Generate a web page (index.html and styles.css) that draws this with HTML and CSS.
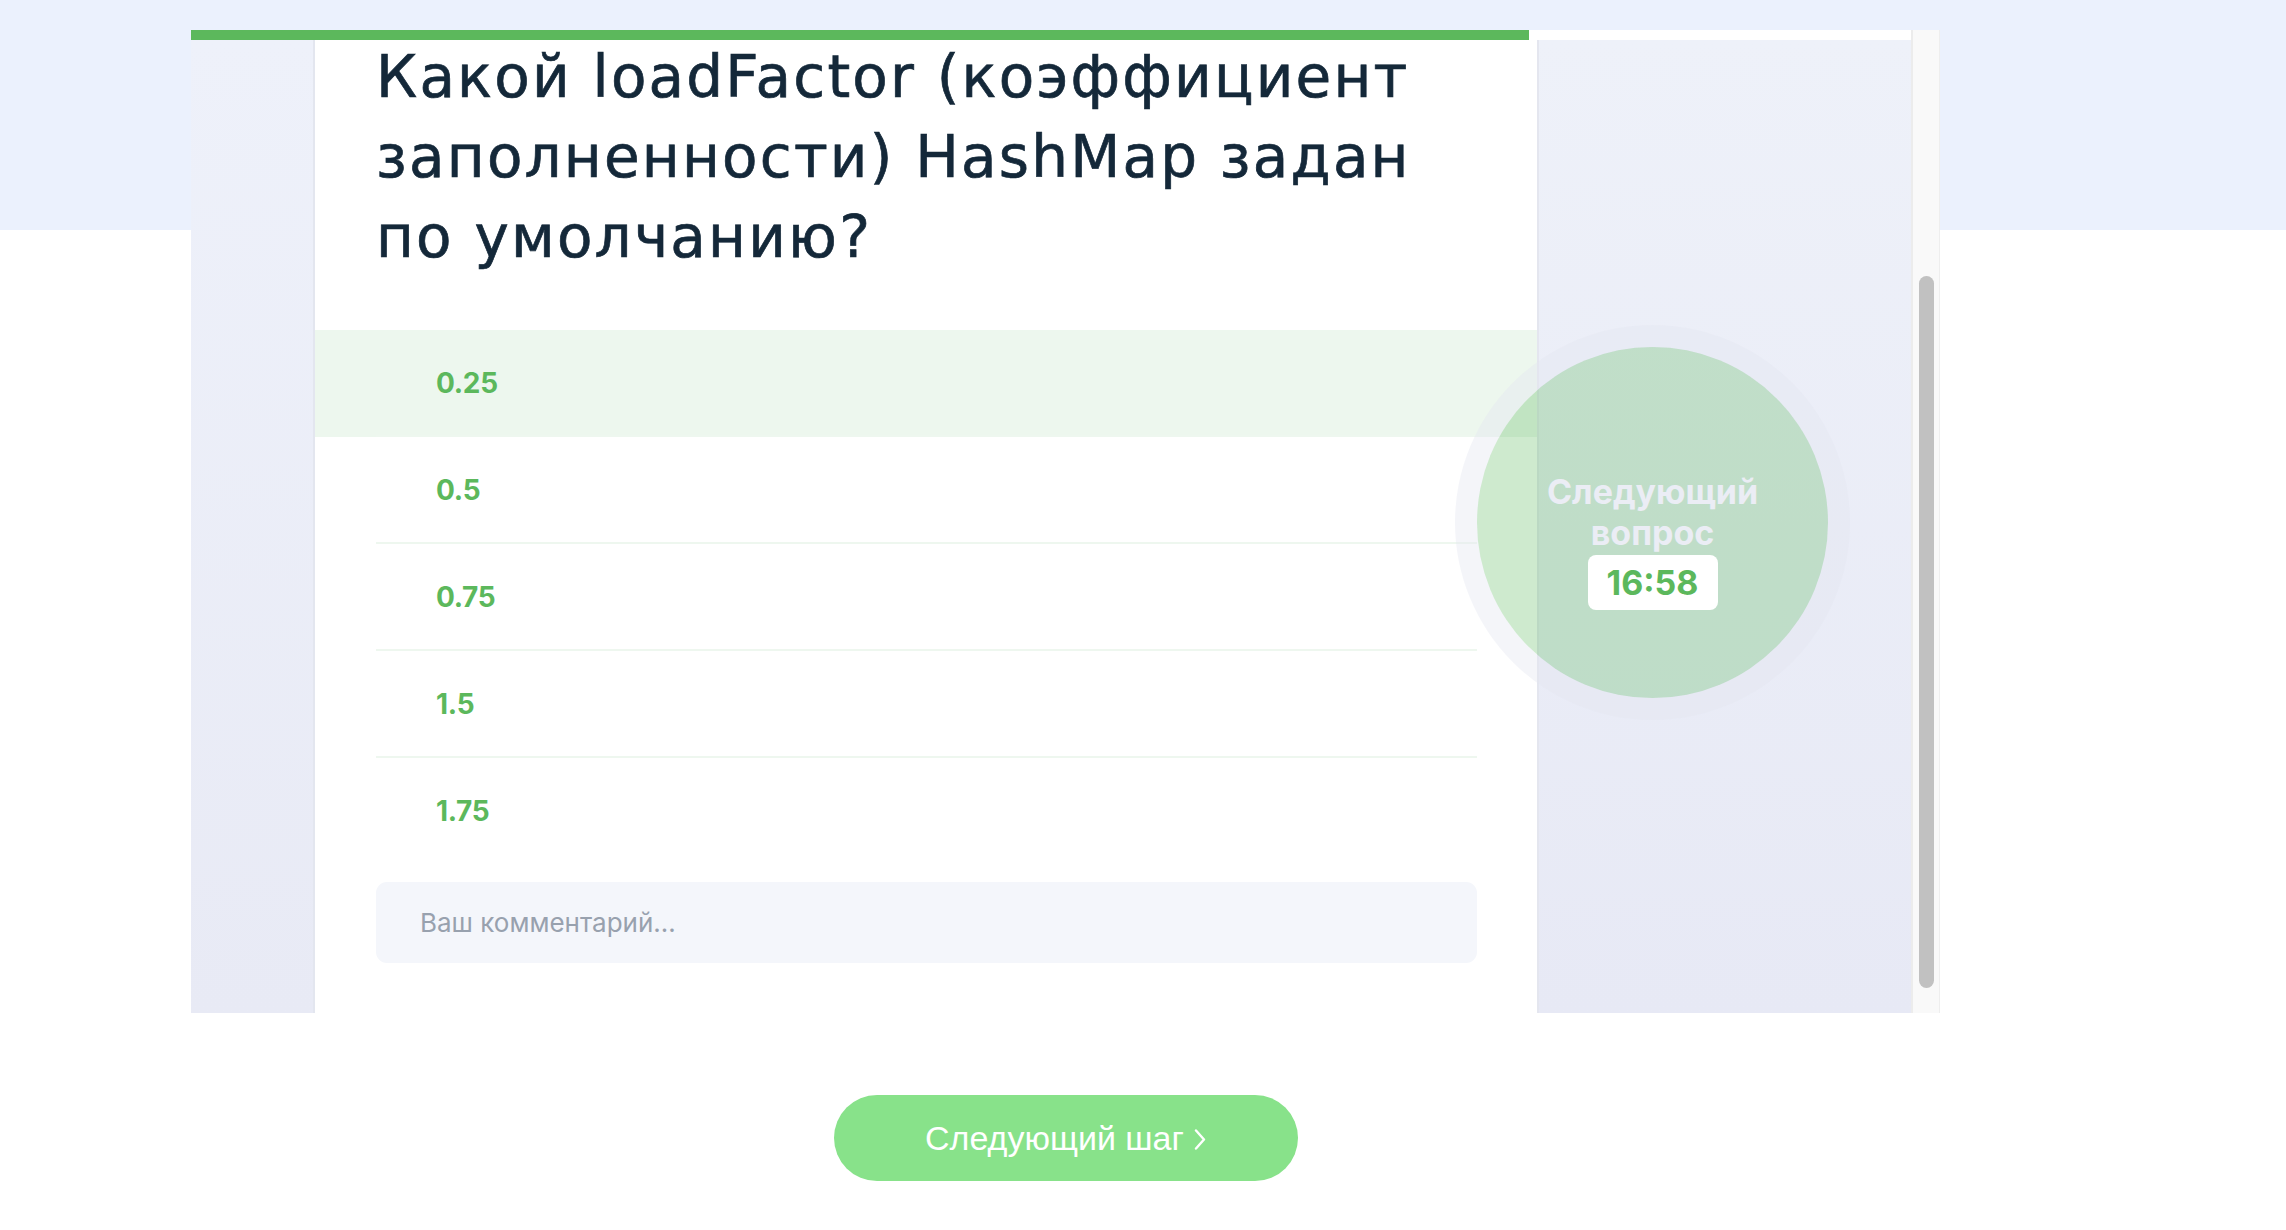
FILE: index.html
```html
<!DOCTYPE html>
<html lang="ru">
<head>
<meta charset="utf-8">
<title>Вопрос</title>
<link rel="stylesheet" href="styles.css">
</head>
<body>
<div class="page">
  <div class="quiz-frame">
    <div class="frame-content">
      <div class="progress"><div class="progress-fill" style="width: 77.8%"></div></div>
      <div class="panels">
        <aside class="gutter gutter-left"></aside>
        <main class="question">
          <h1 class="question-title">Какой loadFactor (коэффициент заполненности) HashMap задан по умолчанию?</h1>
          <ul class="options">
            <li class="option active"><div class="option-inner">0.25</div></li>
            <li class="option"><div class="option-inner">0.5</div></li>
            <li class="option"><div class="option-inner">0.75</div></li>
            <li class="option"><div class="option-inner">1.5</div></li>
            <li class="option"><div class="option-inner">1.75</div></li>
          </ul>
          <div class="comment">Ваш комментарий…</div>
        </main>
        <aside class="gutter gutter-right"></aside>
        <div class="timer">
          <div class="timer-label">Следующий вопрос</div>
          <div class="timer-value">16:58</div>
        </div>
      </div>
    </div>
    <div class="scrollbar"><div class="scroll-thumb"></div></div>
  </div>
  <div class="actions">
    <button class="next-btn" type="button">Следующий шаг<svg class="chev" width="12" height="21" viewBox="0 0 12 21"><polyline points="2,1.5 10,10.5 2,19.5" fill="none" stroke="#ffffff" stroke-width="2.4" stroke-linecap="round" stroke-linejoin="round"/></svg></button>
  </div>
</div>
</body>
</html>
```
FILE: styles.css
```css
* { box-sizing: border-box; }

html, body {
  margin: 0;
  padding: 0;
}

body {
  background: linear-gradient(#ebf1fd 0, #ebf1fd 230px, #ffffff 230px, #ffffff 100%);
  min-height: 1230px;
  font-family: "Inter", "Noto Sans", sans-serif;
}

.page {
  width: 1749px;
  margin-left: 191px;
  padding-top: 30px;
}

.quiz-frame {
  display: flex;
  height: 983px;
  background: #ffffff;
  overflow: hidden;
}

.frame-content {
  flex: 0 0 1720px;
  display: flex;
  flex-direction: column;
}

.progress {
  height: 10px;
  background: #ffffff;
}

.progress-fill {
  height: 100%;
  background: #5cb85c;
}

.panels {
  position: relative;
  flex: 1;
  display: flex;
  overflow: hidden;
}

.gutter-left {
  flex: 0 0 124px;
  background: linear-gradient(#eef1fa, #e8eaf5);
  border-right: 2px solid #e3e6ef;
}

.gutter-right {
  flex: 0 0 374px;
  background: linear-gradient(#eef1f9, #e7e9f5);
  border-left: 2px solid #e4e6ef;
}

.question {
  flex: 0 0 1222px;
  background: #ffffff;
  display: flex;
  flex-direction: column;
}

.question-title {
  margin: -3px 60px 53px 61px;
  font-family: "DejaVu Sans", sans-serif;
  font-weight: 400;
  font-size: 58px;
  line-height: 80px;
  letter-spacing: 2.2px;
  -webkit-text-stroke: 0.7px #142839;
  color: #142839;
}

.options {
  list-style: none;
  margin: 0;
  padding: 0;
}

.option {
  padding: 0 60px 0 61px;
}

.option.active {
  background: #edf7ee;
}

.option-inner {
  height: 107px;
  display: flex;
  align-items: center;
  padding-left: 60px;
  border-bottom: 2px solid #eef7ef;
  font-family: "Inter", sans-serif;
  font-weight: 700;
  font-size: 28px;
  letter-spacing: -0.3px;
  color: #5cb85c;
}

.option:last-child .option-inner {
  border-bottom: none;
  height: 105px;
}

.comment {
  margin: 19px 60px 0 61px;
  height: 81px;
  border-radius: 11px;
  background: #f4f6fb;
  display: flex;
  align-items: center;
  padding-left: 44px;
  font-family: "Inter", sans-serif;
  font-size: 26px;
  color: #98a1ae;
}

.timer {
  position: absolute;
  left: 1286px;
  top: 307px;
  width: 351px;
  height: 351px;
  border-radius: 50%;
  background: rgba(92, 184, 92, 0.3);
  box-shadow: 0 0 0 22px rgba(228, 230, 240, 0.4);
  display: flex;
  flex-direction: column;
  align-items: center;
  justify-content: center;
  padding-top: 36px;
}

.timer-label {
  width: 250px;
  text-align: center;
  font-family: "Inter", sans-serif;
  font-weight: 700;
  font-size: 34px;
  line-height: 41px;
  color: #ebedf5;
}

.timer-value {
  margin-top: 2px;
  width: 130px;
  height: 55px;
  border-radius: 8px;
  background: #ffffff;
  display: flex;
  align-items: center;
  justify-content: center;
  font-family: "Inter", sans-serif;
  font-weight: 700;
  font-size: 34px;
  color: #5cb85c;
}

.scrollbar {
  flex: 0 0 29px;
  background: #f9f9f9;
  border-left: 2px solid #ececec;
  border-right: 1px solid #eeeeee;
  padding: 246px 0 0 6px;
}

.scroll-thumb {
  width: 15px;
  height: 712px;
  border-radius: 8px;
  background: #c1c1c1;
}

.actions {
  display: flex;
  justify-content: center;
  padding-top: 82px;
}

.next-btn {
  width: 464px;
  height: 86px;
  border: none;
  border-radius: 43px;
  background: #88e28a;
  color: #ffffff;
  font-family: "Liberation Sans", Arial, sans-serif;
  font-size: 34px;
  display: flex;
  align-items: center;
  justify-content: center;
  padding: 0;
  cursor: pointer;
}

.chev {
  margin-left: 10px;
  margin-top: 2px;
}
```
